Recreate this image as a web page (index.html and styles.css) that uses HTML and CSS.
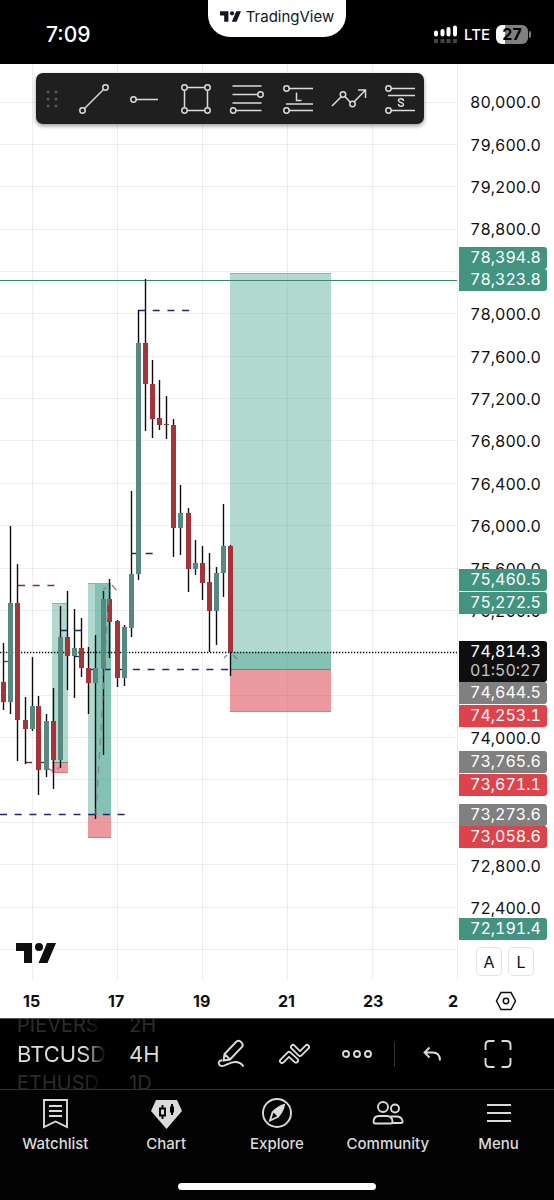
FILE: index.html
```html
<!DOCTYPE html>
<html lang="en">
<head>
    <meta charset="UTF-8">
    <meta name="viewport" content="width=device-width, initial-scale=1.0">
    <title>BTCUSD 4H</title>
    <link rel="stylesheet" href="styles.css">
</head>
<body>
    <header class="status-bar">
        <span class="clock">7:09</span>
        <div class="brand">
            <svg class="brand-mark" viewBox="0 0 40 20"><path d="M0 0h16v20H8V8H0zM31 0h9l-8.500 20h-9z"/><circle cx="23" cy="4" r="4"/></svg>
            <span>TradingView</span>
        </div>
        <div class="signal">
            <svg class="bars" width="24" height="20" viewBox="0 0 24 20">
                <path d="M2 8.500v2M8.500 7v3.500M14.500 5v5.500M21 3.500v7" stroke="#fff" stroke-width="4" stroke-linecap="round"/>
                <path d="M0 17h4M6.500 17h4M12.500 17h4M19 17h4" stroke="#454545" stroke-width="4"/>
            </svg>
            <span>LTE</span>
            <span class="battery">27</span>
        </div>
    </header>

    <main class="chart">
        <div class="pane">
            <svg class="plot" id="plot"></svg>
            <svg class="watermark" viewBox="0 0 40 20"><path d="M0 0h16v20H8V8H0zM31 0h9l-8.500 20h-9z"/><circle cx="23" cy="4" r="4"/></svg>
        </div>
        <div class="price-axis">
            <div class="prices" id="prices"></div>
            <div class="tags" id="tags"></div>
            <div class="scale-modes">
                <button>A</button>
                <button>L</button>
            </div>
        </div>

        <div class="draw-tools">
            <svg class="grip" width="12" height="18" viewBox="0 0 12 18"><path d="M2 2h.01M10 2h.01M2 9h.01M10 9h.01M2 16h.01M10 16h.01"/></svg>
            <button aria-label="Trend line"><svg viewBox="0 0 34 34"><path d="M7.500 26.500l19-19"/><circle cx="5.500" cy="28.500" r="2.700"/><circle cx="28.500" cy="5.500" r="2.700"/></svg></button>
            <button aria-label="Horizontal ray"><svg viewBox="0 0 34 34"><path d="M8 17.500h22"/><circle cx="5.500" cy="17.500" r="2.700"/></svg></button>
            <button aria-label="Rectangle"><svg viewBox="0 0 34 34"><path d="M8.500 5.500h17M8.500 28.500h17M5.500 8.500v17M28.500 8.500v17"/><circle cx="5.500" cy="5.500" r="2.700"/><circle cx="28.500" cy="5.500" r="2.700"/><circle cx="5.500" cy="28.500" r="2.700"/><circle cx="28.500" cy="28.500" r="2.700"/></svg></button>
            <button aria-label="Fib retracement"><svg viewBox="0 0 34 34"><path d="M2.500 4h29M2.500 12.500H28M2.500 21h29M6 28.500h25.500"/><circle cx="30.500" cy="12.500" r="2.700"/><circle cx="3.200" cy="28.500" r="2.700"/></svg></button>
            <button aria-label="Long position"><svg viewBox="0 0 34 34"><path d="M8 6.500h24M5 22h27M8 28.500h24M15.500 10.500v8h5"/><circle cx="5.500" cy="6.500" r="2.700"/><circle cx="5.500" cy="28.500" r="2.700"/></svg></button>
            <button aria-label="Path"><svg viewBox="0 0 34 34"><path d="M0 24l9-9M13 14.500l5.500 6M22.500 19.500L33.500 8M26 8h7.500v8"/><circle cx="11" cy="12.500" r="2.700"/><circle cx="20.500" cy="22" r="2.700"/></svg></button>
            <button aria-label="Short position"><svg viewBox="0 0 34 34"><path d="M8 6.500h24M5 13.500h27M8 28.500h24M20.500 19c0-3-5-3-5-.500s5 1.500 5 4-5 2.500-5-.500"/><circle cx="5.500" cy="6.500" r="2.700"/><circle cx="5.500" cy="28.500" r="2.700"/></svg></button>
        </div>
    </main>

    <div class="time-axis">
        <div class="dates">
            <span>15</span><span>17</span><span>19</span><span>21</span><span>23</span><span>2</span>
        </div>
        <button class="axis-settings" aria-label="Axis settings">
            <svg width="22" height="22" viewBox="0 0 22 22"><path d="M6 2.500h10l4.500 8.500-4.500 8.500H6L1.500 11z"/><circle cx="11" cy="11" r="2.700"/></svg>
        </button>
    </div>

    <div class="toolbar">
        <div class="wheel symbol-wheel">
            <span class="ghost">PIEVERS</span>
            <span class="current">BTCUSD</span>
            <span class="ghost">ETHUSD</span>
        </div>
        <div class="wheel interval-wheel">
            <span class="ghost">2H</span>
            <span class="current">4H</span>
            <span class="ghost">1D</span>
        </div>
        <div class="actions">
            <button aria-label="Draw"><svg viewBox="0 0 32 32"><path d="M8.500 22.500l1-6.500L21.500 3.500q2-1.500 4 0l1.500 1.500q1.500 2 0 4L15 21.500zM9.500 16l5.500 5.500M7 22c-4 1-4 4-2 5.500 4 3 9-4.500 16-3.500 4 .500 6 2 7.500 4.500"/></svg></button>
            <button aria-label="Indicators"><svg class="chevrons" viewBox="0 0 32 32">
                <path class="outer" d="M4 23l7-7 7 6.500"/><path class="inner" d="M4 23l7-7 7 6.500"/>
                <path class="outer" d="M15 9l7 7 7-7"/><path class="inner" d="M15 9l7 7 7-7"/>
            </svg></button>
            <button aria-label="More"><svg viewBox="0 0 32 32"><circle cx="5" cy="16" r="3"/><circle cx="16" cy="16" r="3"/><circle cx="27" cy="16" r="3"/></svg></button>
            <span class="divider"></span>
            <button aria-label="Undo"><svg viewBox="0 0 32 32"><path d="M13.500 9.500l-5 5 5 5M9 14.500h7.500q7.500 0 7.500 8"/></svg></button>
            <button aria-label="Fullscreen"><svg viewBox="0 0 32 32"><path d="M3.500 12V7q0-4 4-4h5M19.500 3h5q4 0 4 4v5M28.500 20v5q0 4-4 4h-5M12.500 29h-5q-4 0-4-4v-5"/></svg></button>
        </div>
    </div>

    <nav class="tabs">
        <a href="#"><svg viewBox="0 0 32 32"><path d="M5 3h23v27l-11.500-5.500L5 30zM10 9h13M10 14h13M10 19h13"/></svg>Watchlist</a>
        <a href="#"><svg viewBox="0 0 32 32"><path class="solid" d="M6 3h21l5 11-15.500 18L1 14z"/><path class="dark" d="M10 11.500h5v7h-5zM12.500 8v3.500M12.500 18.500V22M22 7v11"/><path class="dark" stroke-width="4" d="M22 9.500v6"/></svg>Chart</a>
        <a href="#"><svg viewBox="0 0 32 32"><circle cx="16" cy="16" r="14"/><path d="M9 23.500l2.500-8q6-6 11.500-7.500-1 6-6.500 12z"/><path class="solid" d="M11.500 14.500Q17 9 23 8q-1 6-6 12z"/></svg>Explore</a>
        <a href="#"><svg viewBox="0 0 32 32"><circle cx="11" cy="10" r="5"/><circle cx="23" cy="11.500" r="4"/><path d="M7 19h8q5 0 5.500 5.500 0 2-2 2h-15q-2 0-2-2Q2 19 7 19zM18.500 19.500h6q5 0 6 4.500.500 2-1.500 2H20"/></svg>Community</a>
        <a href="#"><svg viewBox="0 0 32 32"><path d="M4 8h24M4 16h24M4 24h24"/></svg>Menu</a>
    </nav>
    <div class="home-indicator"></div>

    <script>
        // [x, high, low, body top, body bottom, direction]
        const candles = [
            [3, 643, 710, 682, 702, 'down'],
            [10, 526, 714, 603, 702, 'up'],
            [17, 564, 761, 603, 720, 'down'],
            [25, 697, 764, 720, 729, 'down'],
            [32, 657, 731, 706, 729, 'up'],
            [38, 696, 795, 706, 770, 'down'],
            [46, 714, 777, 721, 770, 'up'],
            [53, 688, 789, 721, 760, 'down'],
            [60, 606, 768, 637, 760, 'up'],
            [67, 591, 690, 637, 656, 'down'],
            [74, 609, 698, 648, 656, 'up'],
            [81, 618, 677, 648, 668, 'down'],
            [88, 647, 714, 668, 683, 'down'],
            [95, 635, 819, 668, 683, 'up'],
            [103, 591, 755, 599, 669, 'up'],
            [109, 579, 658, 599, 622, 'down'],
            [117, 620, 687, 621, 678, 'down'],
            [124, 625, 686, 627, 678, 'up'],
            [131, 491, 637, 574, 628, 'up'],
            [138, 310, 580, 343, 574, 'up'],
            [145, 279, 431, 343, 384, 'down'],
            [152, 360, 438, 384, 419, 'down'],
            [159, 380, 430, 418, 425, 'down'],
            [166, 396, 439, 424, 425, 'down'],
            [173, 419, 557, 425, 528, 'down'],
            [180, 485, 555, 513, 528, 'up'],
            [188, 508, 592, 513, 569, 'down'],
            [195, 540, 575, 563, 569, 'up'],
            [202, 546, 600, 563, 583, 'down'],
            [209, 553, 652, 582, 611, 'down'],
            [216, 567, 645, 573, 611, 'up'],
            [223, 504, 597, 546, 573, 'up'],
            [230, 545, 676, 546, 652, 'down']
        ];

        // [x, y, width, height, class]
        const zones = [
            [230, 273, 101, 397, 'profit'],
            [230, 652, 101, 18, 'profit'],
            [230, 670, 101, 42, 'loss'],
            [52, 603, 16, 160, 'profit'],
            [52, 763, 16, 10, 'loss'],
            [88, 583, 23, 232, 'profit'],
            [95, 583, 16, 232, 'profit'],
            [88, 815, 23, 23, 'loss']
        ];

        // [x1, y, x2, class]
        const levels = [
            [0, 280.5, 2000, 'level-green'],
            [230, 273.5, 331, 'level-edge'],
            [230, 669.5, 331, 'level-entry'],
            [230, 711.5, 331, 'level-loss'],
            [52, 603.5, 68, 'level-edge'],
            [52, 762.5, 68, 'level-entry'],
            [52, 772.5, 68, 'level-loss'],
            [88, 583.5, 111, 'level-edge'],
            [88, 837.5, 111, 'level-loss'],
            [138, 310.5, 190, 'level-blue'],
            [131, 553.5, 153, 'level-blue'],
            [18, 585.5, 55, 'level-red'],
            [25, 762.5, 52, 'level-red'],
            [3, 661.5, 10, 'level-red'],
            [60, 630.5, 82, 'level-blue'],
            [74, 656.5, 82, 'level-blue'],
            [89, 669.5, 96, 'level-blue'],
            [103.5, 669.5, 230, 'level-blue'],
            [0, 814.5, 125, 'level-blue']
        ];

        const tags = [
            ['78,394.8', 247, 'green'],
            ['78,323.8', 269, 'green'],
            ['75,460.5', 569, 'green'],
            ['75,272.5', 592, 'green'],
            ['74,814.3', 641, 'black', '01:50:27'],
            ['74,644.5', 682, 'gray'],
            ['74,253.1', 705, 'red'],
            ['73,765.6', 751, 'gray'],
            ['73,671.1', 774, 'red'],
            ['73,273.6', 804, 'gray'],
            ['73,058.6', 826, 'red'],
            ['72,191.4', 918, 'green']
        ];

        // steps whose label gives way to a tag
        const skipped = [78400, 74800, 74400, 73600, 73200];

        const chartTop = 64;
        const firstGrid = 102.5;
        const gridStep = 42.37;

        function drawPlot() {
            let out = `<g transform="translate(0 -${chartTop})">`;
            for (let i = 0; i < 21; i++) {
                const y = Math.round(firstGrid + i * gridStep) - 0.5;
                out += `<line class="grid" x1="0" y1="${y}" x2="2000" y2="${y}"/>`;
            }
            for (let i = 0; i < 6; i++) {
                const x = 32.5 + i * 85;
                out += `<line class="grid" x1="${x}" y1="64" x2="${x}" y2="980"/>`;
            }
            zones.forEach(([x, y, w, h, cls]) => {
                out += `<rect class="${cls}" x="${x}" y="${y}" width="${w}" height="${h}"/>`;
            });
            levels.forEach(([x1, y, x2, cls]) => {
                out += `<line class="${cls}" x1="${x1}" y1="${y}" x2="${x2}" y2="${y}"/>`;
            });
            out += '<line class="last-price" x1="0" y1="652.5" x2="2000" y2="652.5"/>';
            candles.forEach(([x, high, low, top, bottom, dir]) => {
                out += `<line class="wick" x1="${x + 0.5}" y1="${high}" x2="${x + 0.5}" y2="${low}"/>`;
                out += `<rect class="${dir}" x="${x - 2}" y="${top}" width="5" height="${bottom - top}"/>`;
            });
            // trade paths
            out += '<path class="trade" d="M96 815L109 590M103 590l3-3M112 585l5 6M48 768l4 3M57 769l3-2M224 658l3-3M233 655l4 4"/>';
            document.getElementById('plot').innerHTML = out + '</g>';
        }

        function fillAxis() {
            let prices = '';
            for (let p = 80000; p >= 72400; p -= 400) {
                prices += `<span>${skipped.includes(p) ? '' : p.toLocaleString('en-US') + '.0'}</span>`;
            }
            document.getElementById('prices').innerHTML = prices;

            document.getElementById('tags').innerHTML = tags.map(([price, y, color, timer]) =>
                `<div class="tag ${color}" style="top: ${y - chartTop}px">${price}${timer ? `<span class="timer">${timer}</span>` : ''}</div>`
            ).join('');
        }

        drawPlot();
        fillAxis();
    </script>
</body>
</html>
```
FILE: styles.css
```css
* {
    box-sizing: border-box;
}

body {
    margin: 0;
    min-height: 100vh;
    display: flex;
    flex-direction: column;
    background: #030303;
    color: #dbdbdb;
    font-family: Inter, "Liberation Sans", sans-serif;
    font-size: 16px;
}

button {
    padding: 0;
    border: none;
    background: none;
    color: inherit;
    font: inherit;
    cursor: pointer;
}

svg {
    display: block;
    fill: none;
}

/* status bar */
.status-bar {
    height: 64px;
    display: grid;
    grid-template-columns: 1fr 138px 1fr;
    align-items: center;
    background: #000;
    color: #fff;
}

.clock {
    padding: 4px 0 0 46px;
    font-size: 21px;
    font-weight: 500;
}

.brand {
    align-self: start;
    height: 37px;
    display: flex;
    align-items: center;
    justify-content: center;
    gap: 5px;
    padding-bottom: 4px;
    border-radius: 0 0 22px 22px;
    background: #fff;
    color: #131722;
    font-size: 15px;
    font-weight: 400;
}

.brand-mark {
    width: 21px;
    height: 11px;
    fill: #131722;
}

.signal {
    display: flex;
    align-items: center;
    justify-content: flex-end;
    gap: 6px;
    padding: 4px 26px 0 0;
    font-size: 15px;
    font-weight: 500;
}

.battery {
    position: relative;
    width: 32px;
    height: 19px;
    border-radius: 6px;
    background: linear-gradient(90deg, #fff 27%, #808080 27%);
    color: #000;
    font-size: 16px;
    font-weight: 700;
    line-height: 19px;
    text-align: center;
}

.battery::after {
    content: "";
    position: absolute;
    top: 6px;
    right: -3px;
    width: 2px;
    height: 7px;
    border-radius: 0 2px 2px 0;
    background: #808080;
}

/* chart */
.chart {
    position: relative;
    flex: 1;
    min-height: 916px;
    display: flex;
    background: #fff;
    color: #0f0f0f;
}

.pane {
    position: relative;
    flex: 1;
    border-right: 1px solid #ededed;
}

.plot {
    position: absolute;
    width: 100%;
    height: 100%;
}

.watermark {
    position: absolute;
    left: 16px;
    bottom: 17px;
    width: 40px;
    height: 20px;
    overflow: visible;
    fill: #0f0f0f;
}

.grid {
    stroke: #0f0f0f;
    stroke-opacity: 0.07;
}

.wick {
    stroke: #0c0c0c;
    stroke-width: 1.4;
}

.up {
    fill: #568980;
}

.down {
    fill: #a63338;
}

.profit {
    fill: #3e9f8a;
    fill-opacity: 0.4;
}

.loss {
    fill: #d93642;
    fill-opacity: 0.5;
}

.level-green {
    stroke: #38866b;
    stroke-width: 1.2;
}

.level-edge {
    stroke: #7fb9ac;
}

.level-entry {
    stroke: #6f8581;
}

.level-loss {
    stroke: #df7580;
}

.level-blue,
.level-red {
    stroke: #23237c;
    stroke-width: 1.3;
    stroke-dasharray: 7 7.7;
}

.level-red {
    stroke: #852c33;
}

.last-price {
    stroke: #0f0f0f;
    stroke-width: 1.4;
    stroke-dasharray: 1.3 1.7;
}

.trade {
    stroke: #858585;
    stroke-width: 1.3;
    stroke-dasharray: 7 7;
}

/* price axis */
.price-axis {
    position: relative;
    width: 96px;
    display: flex;
    padding: 17px 0 51px;
    font-variant-numeric: tabular-nums;
}

.prices {
    flex: 1;
    display: flex;
    flex-direction: column;
}

.prices span {
    flex: 1;
    display: flex;
    align-items: center;
    padding-left: 12px;
}

.tag {
    position: absolute;
    left: 1px;
    width: 88px;
    padding: 0 0 2px 11px;
    border-radius: 0 3px 3px 0;
    color: #fff;
    line-height: 20px;
}

.green {
    background: #429480;
}

.red {
    background: #de434c;
}

.gray {
    background: #808080;
}

.black {
    background: #0f0f0f;
}

.timer {
    display: block;
    color: #c4c4c4;
    line-height: 19px;
}

.scale-modes {
    position: absolute;
    left: 18px;
    bottom: 4px;
    display: flex;
    gap: 6px;
}

.scale-modes button {
    width: 26px;
    height: 29px;
    border: 1px solid #e4e4e4;
    border-radius: 5px;
    background: #fff;
}

/* drawing tools */
.draw-tools {
    position: absolute;
    top: 9px;
    left: 36px;
    width: 388px;
    height: 51px;
    display: flex;
    align-items: center;
    gap: 17px;
    padding-left: 10px;
    border-radius: 7px;
    background: #1f1f1f;
    box-shadow: 0 2px 4px rgba(0, 0, 0, 0.4);
    color: #dbdbdb;
}

.draw-tools button svg {
    width: 34px;
    height: 34px;
    stroke: currentColor;
    stroke-width: 1.5;
    overflow: visible;
}

.grip {
    margin-right: 2px;
    stroke: #575757;
    stroke-width: 3;
    stroke-linecap: round;
}

/* time axis */
.time-axis {
    height: 39px;
    display: flex;
    background: #fff;
    color: #0f0f0f;
    border-bottom: 1px solid #555;
}

.dates {
    flex: 1;
    display: flex;
    align-items: center;
    padding-top: 4px;
    overflow: hidden;
    font-weight: 700;
}

.dates span {
    flex: 0 0 85px;
    padding-left: 23px;
}

.axis-settings {
    width: 96px;
    display: flex;
    align-items: center;
    justify-content: center;
    padding-top: 4px;
}

.axis-settings svg {
    stroke: currentColor;
    stroke-width: 1.5;
}

/* bottom toolbar */
.toolbar {
    height: 71px;
    display: flex;
    background: #000;
    border-bottom: 1px solid #2e2e2e;
}

.wheel {
    display: flex;
    flex-direction: column;
    justify-content: center;
    overflow: hidden;
    font-size: 22px;
    line-height: 34px;
}

.symbol-wheel {
    width: 106px;
    padding-left: 17px;
    white-space: nowrap;
    -webkit-mask-image: linear-gradient(90deg, #000 80%, transparent);
    mask-image: linear-gradient(90deg, #000 80%, transparent);
}

.interval-wheel {
    width: 90px;
    padding-left: 23px;
}

.ghost {
    color: #2c2c2c;
    font-size: 20px;
    line-height: 24px;
}

.actions {
    flex: 1;
    display: flex;
    align-items: center;
    gap: 31px;
    padding: 0 40px 0 19px;
}

.actions button:last-child {
    margin-left: auto;
}

.actions svg,
.tabs svg {
    width: 32px;
    height: 32px;
    stroke: #dbdbdb;
    stroke-width: 1.9;
}

.chevrons {
    stroke-linecap: round;
    stroke-linejoin: round;
}

.chevrons .outer {
    stroke-width: 6;
}

.chevrons .inner {
    stroke: #000;
    stroke-width: 2.4;
}

.divider {
    width: 1px;
    height: 25px;
    margin: 0 -10px;
    background: #333;
}

/* tabs */
.tabs {
    height: 92px;
    display: grid;
    grid-template-columns: repeat(5, 1fr);
    padding-top: 7px;
}

.tabs a {
    display: flex;
    flex-direction: column;
    align-items: center;
    gap: 5px;
    color: #dbdbdb;
    font-size: 15px;
    font-weight: 500;
    line-height: 20px;
    text-decoration: none;
}

.tabs .solid {
    fill: #dbdbdb;
    stroke: none;
}

.tabs .dark {
    stroke: #000;
}

.home-indicator {
    width: 198px;
    height: 7px;
    margin: 1px auto 11px;
    border-radius: 4px;
    background: #fff;
}
```
